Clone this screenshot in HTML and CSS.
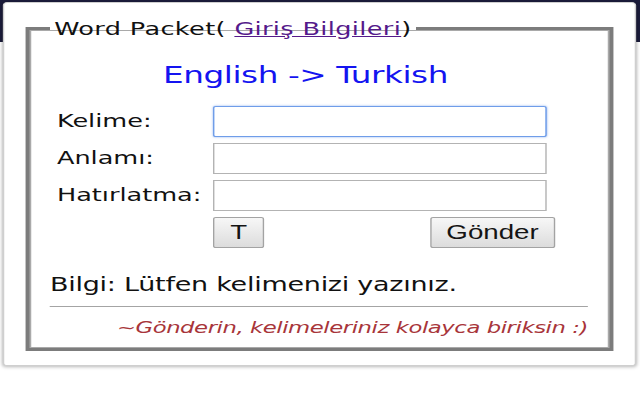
FILE: index.html
```html
<!DOCTYPE html>
<html lang="tr">
<head>
<meta charset="utf-8">
<title>Word Packet</title>
<link rel="stylesheet" href="styles.css">
</head>
<body>
<div class="stage">
  <div class="topbar"></div>
  <div class="popup">
    <fieldset class="packet">
      <legend class="packet-title">Word Packet( <a class="login-link" href="#">Giriş Bilgileri</a>)</legend>
      <div class="direction">English -&gt; Turkish</div>
      <form class="word-form">
        <label class="field-label" for="kelime">Kelime:</label>
        <input class="field-input focused" id="kelime" type="text">
        <label class="field-label" for="anlam">Anlamı:</label>
        <input class="field-input" id="anlam" type="text">
        <label class="field-label" for="hatirlatma">Hatırlatma:</label>
        <input class="field-input" id="hatirlatma" type="text">
        <div class="actions">
          <button class="btn btn-t" type="button">T</button>
          <button class="btn btn-send" type="button">Gönder</button>
        </div>
      </form>
      <p class="info">Bilgi: Lütfen kelimenizi yazınız.</p>
      <hr class="divider">
      <p class="slogan">~Gönderin, kelimeleriniz kolayca biriksin :)</p>
    </fieldset>
  </div>
</div>
</body>
</html>
```
FILE: styles.css
```css
html, body {
  margin: 0;
  padding: 0;
  background: #ffffff;
  overflow: hidden;
}

.stage {
  position: relative;
  width: 450.7px;
  height: 400px;
  transform: scaleX(1.42);
  transform-origin: 0 0;
  font-family: "DejaVu Sans", Verdana, sans-serif;
  color: #111111;
}

.topbar {
  height: 42px;
  background: #1b1c3b;
}

.popup {
  position: absolute;
  left: 2.1px;
  top: 2px;
  width: 445.8px;
  height: 364px;
  box-sizing: border-box;
  background: #ffffff;
  border: 1px solid #cfcfcf;
  border-radius: 3px;
  box-shadow: 0 1px 3px rgba(0, 0, 0, 0.28);
}

.packet {
  margin: 13.5px 0 0 14.5px;
  width: 414px;
  box-sizing: border-box;
  border: 3px solid #7c7c7c;
  box-shadow: inset 0 0 0 1px #a9a9a9;
  padding: 0 14.6px 10px 14.6px;
  min-width: 0;
}

.packet-title {
  font-size: 18px;
  line-height: 23px;
  letter-spacing: 0.25px;
  padding: 0 3px;
  color: #111111;
}

.login-link {
  color: #551a8b;
  text-decoration: underline;
}

.direction {
  margin-top: 21px;
  padding-left: 79.6px;
  font-size: 23px;
  line-height: 28px;
  letter-spacing: -0.3px;
  color: #1414f0;
}

.word-form {
  display: grid;
  grid-template-columns: 110px 234.5px;
  row-gap: 6px;
  align-items: center;
  margin: 17px 0 0 4.9px;
}

.field-label {
  font-size: 18px;
  line-height: 22px;
  white-space: nowrap;
}

.field-input {
  height: 31px;
  box-sizing: border-box;
  margin: 0;
  border: 1px solid #b3b3b3;
  border-radius: 0;
  background: #ffffff;
  outline: none;
  padding: 0 4px;
}

.field-input.focused {
  border: 1px solid #6f9de9;
  border-radius: 2px;
  box-shadow: 0 0 2px rgba(90, 140, 230, 0.7);
}

.actions {
  grid-column: 2;
  display: flex;
  justify-content: space-between;
  margin-right: -6.3px;
}

.btn {
  height: 31px;
  margin: 0;
  padding: 0;
  box-sizing: border-box;
  border: 1px solid #a3a3a3;
  border-radius: 2px;
  background: linear-gradient(#f7f7f7, #dcdcdc);
  font-family: "Liberation Sans", Arial, sans-serif;
  font-size: 19.5px;
  color: #141414;
}

.btn-t {
  width: 36px;
}

.btn-send {
  width: 88px;
}

.info {
  margin: 25px 0 0 0;
  font-size: 19px;
  line-height: 23px;
  letter-spacing: -0.18px;
}

.divider {
  margin: 10px 0 0 0;
  height: 0;
  border: 0;
  border-top: 1px solid #a4a4a4;
}

.slogan {
  margin: 11px 0 0 0;
  font-size: 16px;
  line-height: 20px;
  letter-spacing: -0.3px;
  font-style: italic;
  text-align: right;
  color: #a8353a;
}
```
